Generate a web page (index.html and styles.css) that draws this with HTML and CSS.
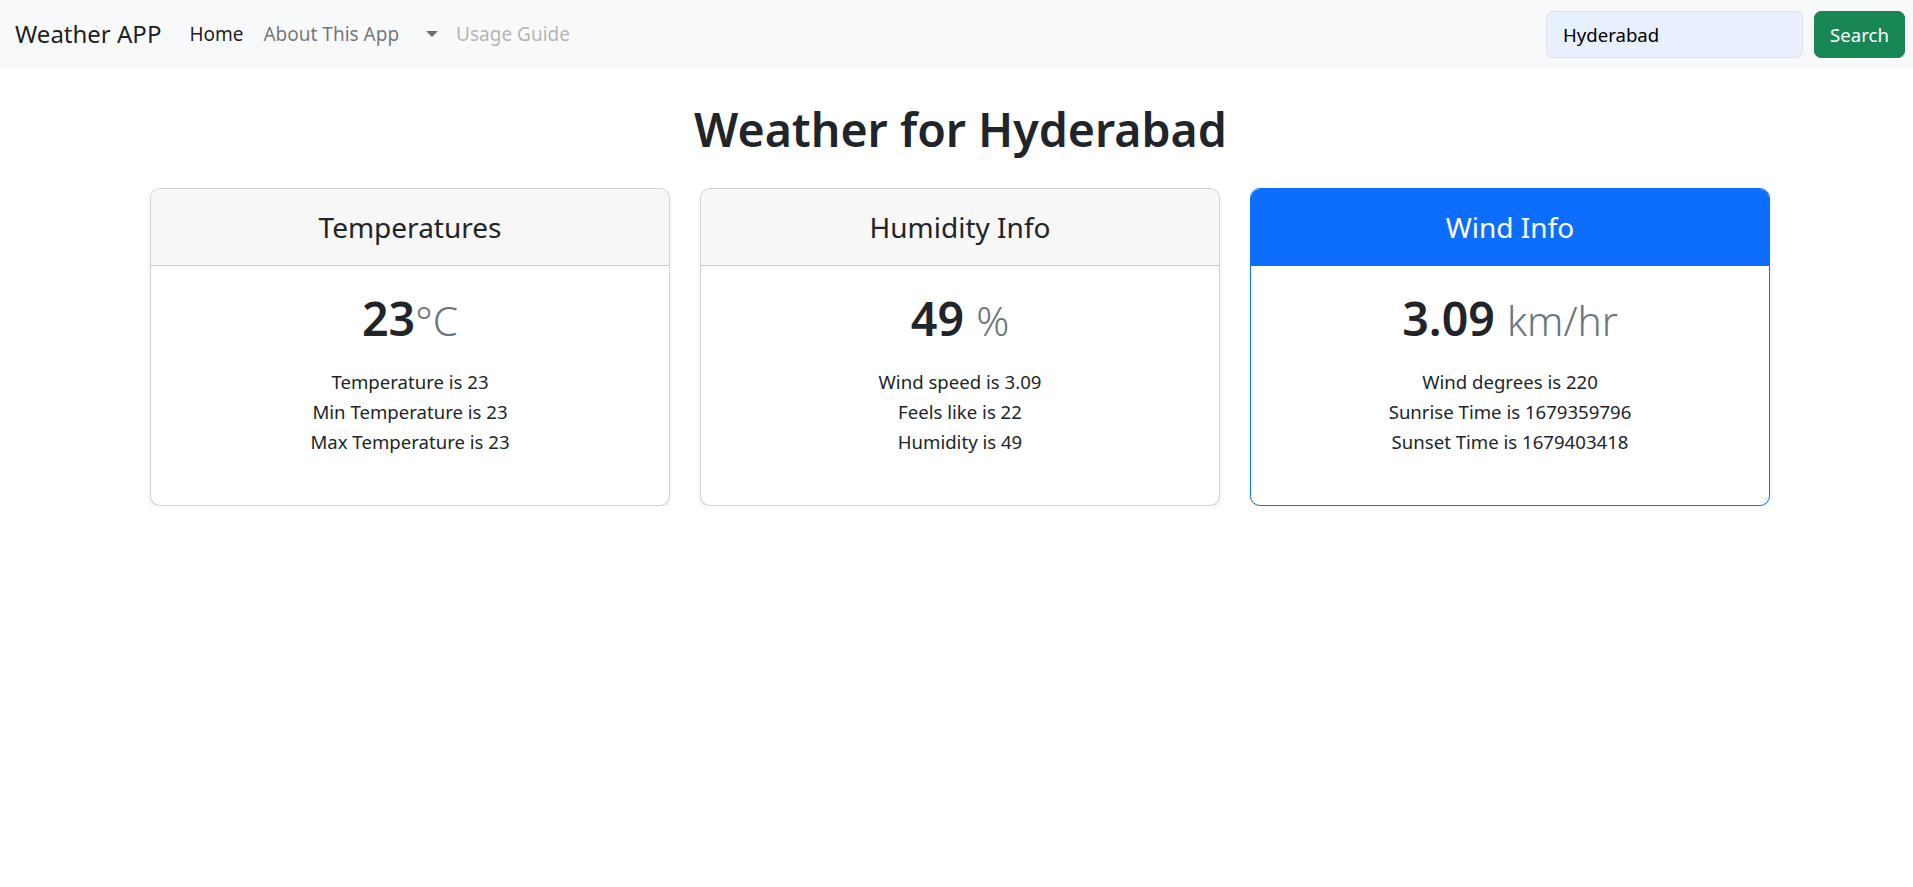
FILE: index.html
```html
<!DOCTYPE html>
<html lang="en">
<head>
<meta charset="utf-8">
<title>Weather APP</title>
<link rel="stylesheet" href="styles.css">
</head>
<body>
<nav class="navbar">
  <div class="nav-left">
    <a class="brand" href="#">Weather APP</a>
    <ul class="nav">
      <li><a class="nav-link active" href="#">Home</a></li>
      <li><a class="nav-link" href="#">About This App</a></li>
      <li><a class="nav-link toggle" href="#"><span class="caret"></span></a></li>
      <li><a class="nav-link disabled" href="#">Usage Guide</a></li>
    </ul>
  </div>
  <form class="search">
    <input class="search-input" type="search" value="Hyderabad">
    <button class="search-btn" type="button">Search</button>
  </form>
</nav>
<main class="main">
  <h1 class="title">Weather for Hyderabad</h1>
  <div class="cards">
    <div class="card">
      <div class="card-header"><h4 class="card-head-text">Temperatures</h4></div>
      <div class="card-body">
        <h1 class="big">23<small class="unit">°C</small></h1>
        <ul class="facts">
          <li>Temperature is 23</li>
          <li>Min Temperature is 23</li>
          <li>Max Temperature is 23</li>
        </ul>
      </div>
    </div>
    <div class="card">
      <div class="card-header"><h4 class="card-head-text">Humidity Info</h4></div>
      <div class="card-body">
        <h1 class="big">49 <small class="unit">%</small></h1>
        <ul class="facts">
          <li>Wind speed is 3.09</li>
          <li>Feels like is 22</li>
          <li>Humidity is 49</li>
        </ul>
      </div>
    </div>
    <div class="card card-primary">
      <div class="card-header"><h4 class="card-head-text">Wind Info</h4></div>
      <div class="card-body">
        <h1 class="big">3.09 <small class="unit">km/hr</small></h1>
        <ul class="facts">
          <li>Wind degrees is 220</li>
          <li>Sunrise Time is 1679359796</li>
          <li>Sunset Time is 1679403418</li>
        </ul>
      </div>
    </div>
  </div>
</main>
</body>
</html>
```
FILE: styles.css
```css
* { box-sizing: border-box; }
html, body { margin: 0; padding: 0; }
body {
  font-family: "Noto Sans", "Open Sans", sans-serif;
  font-size: 18.6px;
  line-height: 30px;
  color: #212529;
  background: #fff;
}
a { text-decoration: none; }

.navbar {
  height: 68px;
  background: #f8f9fa;
  display: flex;
  align-items: center;
  justify-content: space-between;
  padding: 0 8px 0 15px;
}
.nav-left { display: flex; align-items: center; }
.brand {
  font-size: 24px;
  color: rgba(0,0,0,.9);
  margin-right: 18px;
  line-height: 38px;
}
.nav { display: flex; list-style: none; margin: 0; padding: 0; align-items: center; }
.nav-link {
  display: block;
  padding: 10px 10px;
  color: rgba(0,0,0,.55);
  font-size: 19px;
  line-height: 30px;
}
.nav-link.active { color: rgba(0,0,0,.9); }
.nav-link.disabled { color: rgba(0,0,0,.3); }
.toggle { padding-left: 17px; padding-right: 8px; }
.caret {
  display: inline-block;
  width: 0; height: 0;
  border-top: 6px solid rgba(0,0,0,.55);
  border-left: 6px solid transparent;
  border-right: 6px solid transparent;
  vertical-align: 4px;
}
.search { display: flex; align-items: center; gap: 11px; margin: 0; }
.search-input {
  width: 257px;
  height: 47px;
  border: 1px solid #dee2e6;
  border-radius: 7px;
  background: #e8f0fe;
  padding: 0 16px;
  font-family: inherit;
  font-size: 18.6px;
  color: #000;
}
.search-btn {
  height: 47px;
  width: 91px;
  padding: 0;
  background: #198754;
  color: #fff;
  border: 1px solid #198754;
  border-radius: 7px;
  font-family: inherit;
  font-size: 18.6px;
}

.main { padding: 0; }
.title {
  margin: 31px 0 29px;
  text-align: center;
  font-size: 46.5px;
  font-weight: 600;
  line-height: 60px;
  padding-left: 8px;
}
.cards {
  display: grid;
  grid-template-columns: repeat(3, 520px);
  gap: 30px;
  justify-content: center;
  padding-left: 7px;
}
.card {
  height: 318px;
  border: 1px solid rgba(0,0,0,.175);
  border-radius: 10px;
  box-shadow: 0 2.5px 5px rgba(0,0,0,.075);
  text-align: center;
  overflow: hidden;
  background: #fff;
}
.card-header {
  background: #f7f7f7;
  border-bottom: 1px solid rgba(0,0,0,.175);
  padding: 20px 20px;
}
.card-head-text {
  margin: 0;
  font-size: 28px;
  font-weight: 400;
  line-height: 36px;
}
.card-primary { border-color: #0d6efd; }
.card-primary .card-header {
  background: #0d6efd;
  border-bottom-color: #0d6efd;
  color: #fff;
}
.card-body { padding: 22px 20px 20px; }
.big {
  margin: 0 0 10px;
  font-size: 46.5px;
  font-weight: 600;
  line-height: 60px;
}
.unit {
  font-size: 40.7px;
  font-weight: 300;
  color: #6c757d;
}
.facts {
  list-style: none;
  margin: 17px 0 0;
  padding: 0;
  font-size: 18.6px;
  line-height: 30px;
}
```
